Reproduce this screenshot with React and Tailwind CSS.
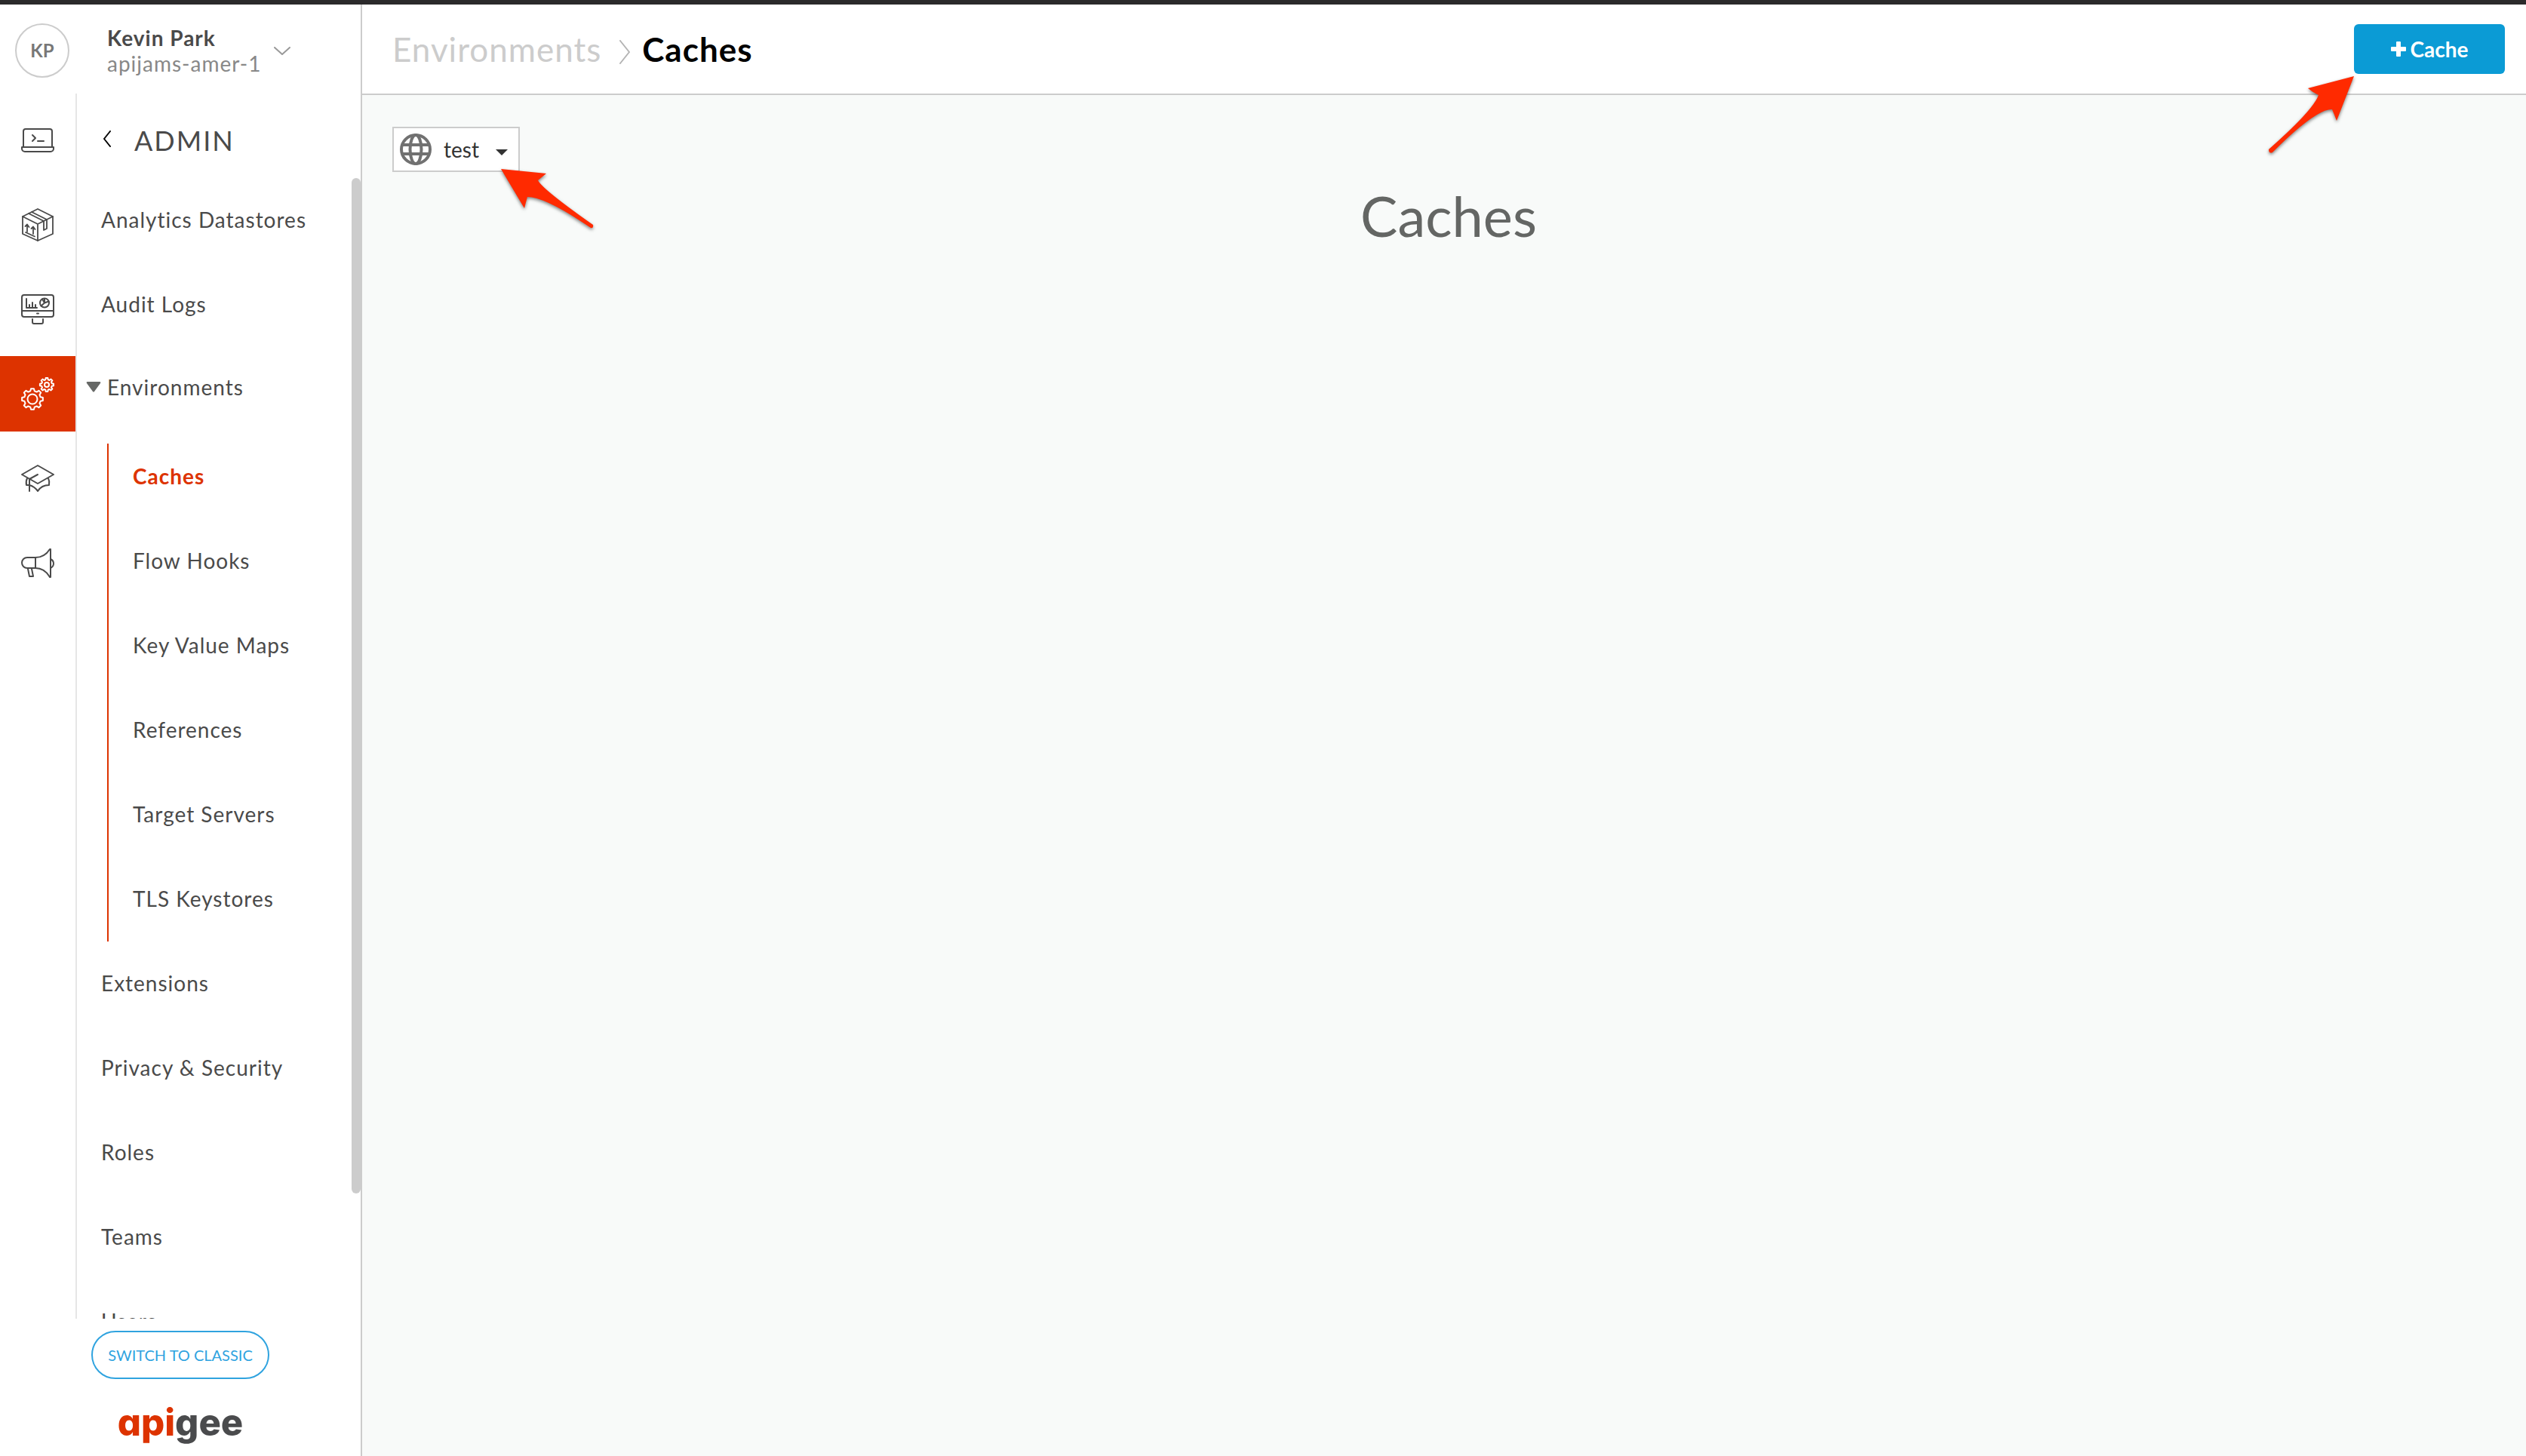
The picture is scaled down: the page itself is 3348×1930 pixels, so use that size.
import React from "react";

const stroke = {
  viewBox: "0 0 44 44",
  fill: "none",
  stroke: "currentColor",
  strokeWidth: 2,
  strokeLinecap: "round",
  strokeLinejoin: "round",
  "aria-hidden": true,
};

function LaptopIcon() {
  return (
    <svg {...stroke} className="size-11">
      <path d="M3 30V10a3 3 0 0 1 3-3h32a3 3 0 0 1 3 3v20" />
      <path d="M1 31h42v2a4 4 0 0 1-4 4H5a4 4 0 0 1-4-4z" />
      <path d="M15 15l4 4-4 4M22 23h8" />
    </svg>
  );
}

function PackageIcon() {
  return (
    <svg {...stroke} className="size-11" strokeWidth="1.8">
      <path d="M22 1l20 10v23L22 43 2 34V11z" />
      <path d="M2 11l20 10 20-10M22 21v22" />
      <path d="M10 7l20 10v12l4-2V15L14 5" />
      <path d="M8 31V22M5.500 24L8 21.500l2.500 3.500M16 34v-9M13.500 27l2.500-2.500 2.500 3.500M6 32l12 5.500" />
    </svg>
  );
}

function MonitorIcon() {
  return (
    <svg {...stroke} className="size-11">
      <rect x="1" y="3" width="42" height="29" rx="3" />
      <path d="M1 24h42M21 27.500h2M15 35v4a2 2 0 0 0 2 2h10a2 2 0 0 0 2-2v-4" />
      <path d="M7 8v12h14M11 16v3M15 13v6M19 16v3" />
      <circle cx="31" cy="13.500" r="6" />
      <path d="M31 8v5.500l5.500-2M31 13.500l-4.500 4M31 13.500l-3-5" />
    </svg>
  );
}

// Outline of a gear with eight teeth, centred on (cx, cy).
function gearPath(cx, cy, outer, inner) {
  const points = [];
  for (let i = 0; i < 8; i += 1) {
    const base = (i * Math.PI) / 4;
    [
      [-0.25, inner],
      [-0.14, outer],
      [0.14, outer],
      [0.25, inner],
    ].forEach(([turn, r]) => {
      const x = cx + r * Math.sin(base + turn);
      const y = cy - r * Math.cos(base + turn);
      points.push(`${x.toFixed(2)} ${y.toFixed(2)}`);
    });
  }
  return `M${points.join("L")}Z`;
}

function GearsIcon() {
  return (
    <svg {...stroke} className="size-11">
      <path d={gearPath(15, 29, 14, 11)} />
      <circle cx="15" cy="29" r="6.500" />
      <path d={gearPath(34, 10, 9.2, 7)} />
      <circle cx="34" cy="10" r="3" />
    </svg>
  );
}

function GraduationIcon() {
  return (
    <svg {...stroke} className="size-11">
      <path d="M22 5l21 12-21 12L1 17z" />
      <path d="M22 17l-11 6v16" />
      <path d="M8 22q-2 4-1 9h4M36 22q2 4 1 9-10 0-15 8-4-6-11-8" />
    </svg>
  );
}

function MegaphoneIcon() {
  return (
    <svg {...stroke} className="size-11">
      <path d="M19 15H8a7 7 0 0 0 0 14h11z" />
      <path d="M19 15Q31 15 38 4h1v37h-1Q31 29 19 29" />
      <path d="M39 17q4 2 4 6t-4 6M9 30l2 10h5l-2-10" />
    </svg>
  );
}

function GlobeIcon() {
  return (
    <svg viewBox="0 0 42 42" fill="none" stroke="#717171" strokeWidth="4" className="size-[42px]" aria-hidden="true">
      <circle cx="21" cy="21" r="19" />
      <ellipse cx="21" cy="21" rx="7.500" ry="19" />
      <path d="M3 15h36M3 27h36" />
    </svg>
  );
}

function PlusIcon() {
  return (
    <svg viewBox="0 0 20 20" fill="currentColor" className="size-5" aria-hidden="true">
      <rect x="7" y="0" width="6" height="20" rx="1" />
      <rect x="0" y="7" width="20" height="6" rx="1" />
    </svg>
  );
}

function Chevron({ d, className, width, height, strokeWidth }) {
  return (
    <svg
      width={width}
      height={height}
      viewBox={`0 0 ${width} ${height}`}
      fill="none"
      stroke="currentColor"
      strokeWidth={strokeWidth}
      strokeLinecap="round"
      strokeLinejoin="round"
      className={className}
      aria-hidden="true"
    >
      <path d={d} />
    </svg>
  );
}

const railItems = [
  { label: "Develop", Icon: LaptopIcon },
  { label: "Publish", Icon: PackageIcon },
  { label: "Analyze", Icon: MonitorIcon },
  { label: "Admin", Icon: GearsIcon, active: true },
  { label: "Learn", Icon: GraduationIcon },
  { label: "Announcements", Icon: MegaphoneIcon },
];

const environmentItems = [
  "Caches",
  "Flow Hooks",
  "Key Value Maps",
  "References",
  "Target Servers",
  "TLS Keystores",
];

function NavLink({ children }) {
  return (
    <li>
      <a href="#" className="flex h-28 items-center pb-0.5 pl-8">
        {children}
      </a>
    </li>
  );
}

function Sidebar() {
  return (
    <aside className="flex w-[480px] shrink-0 flex-col border-r-2 border-[#cccccc] bg-white text-[#4a4a4a]">
      <div className="flex h-[118px] shrink-0 items-center pt-1 pl-5">
        <div className="flex size-[72px] items-center justify-center rounded-full border-2 border-[#cccccc] text-2xl font-bold text-[#777777]">
          KP
        </div>
        <button type="button" className="ml-[50px] flex items-center gap-4 text-left text-[28px] leading-[34px] tracking-[1px]">
          <span>
            <span className="block font-bold">Kevin Park</span>
            <span className="block text-[#888888]">apijams-amer-1</span>
          </span>
          <Chevron d="M1 1l10 9 10-9" width={22} height={11} strokeWidth={2} className="text-[#999999]" />
        </button>
      </div>

      <div className="flex min-h-0 flex-1">
        <nav aria-label="Sections" className="flex w-[102px] shrink-0 flex-col gap-3 border-r-2 border-[#e6e6e6] pt-3">
          {railItems.map(({ label, Icon, active }) => (
            <a
              key={label}
              href="#"
              aria-label={label}
              className={
                active
                  ? "flex h-[100px] items-center justify-center bg-[#dd3300] text-white"
                  : "flex h-[100px] items-center justify-center"
              }
            >
              <Icon />
            </a>
          ))}
        </nav>

        <div className="flex min-w-0 flex-1 flex-col">
          <div className="flex h-28 shrink-0 items-center gap-[30px] pt-3 pl-8">
            <button type="button" aria-label="Back" className="-mt-1 pl-0.5 text-black">
              <Chevron d="M10 1L2 11l8 10" width={12} height={22} strokeWidth={2} />
            </button>
            <h2 className="text-4xl tracking-[2px]">ADMIN</h2>
          </div>

          <div className="flex min-h-0 flex-1">
            <nav
              aria-label="Admin"
              className="min-w-0 flex-1 overflow-hidden text-[28px] leading-[34px] tracking-[1px]"
            >
              <ul>
                <NavLink>Analytics Datastores</NavLink>
                <NavLink>Audit Logs</NavLink>
                <li>
                  <button type="button" aria-expanded="true" className="flex h-27 items-center gap-2 pb-0.5 pl-3 tracking-[1px]">
                    <svg width="20" height="14" viewBox="0 0 20 14" fill="#666866" aria-hidden="true">
                      <path d="M2 0h16q2 0 1 2l-8 11q-1 1-2 0L1 2Q0 0 2 0z" />
                    </svg>
                    Environments
                  </button>
                  <ul className="mt-5 ml-10 flex flex-col gap-6 border-l-2 border-[#dd3300] pb-3">
                    {environmentItems.map((item) => (
                      <li key={item}>
                        <a
                          href="#"
                          className={
                            item === "Caches"
                              ? "flex h-22 items-center pb-0.5 pl-8 font-bold text-[#dd3300]"
                              : "flex h-22 items-center pb-0.5 pl-8"
                          }
                        >
                          {item}
                        </a>
                      </li>
                    ))}
                  </ul>
                </li>
                <NavLink>Extensions</NavLink>
                <NavLink>Privacy &amp; Security</NavLink>
                <NavLink>Roles</NavLink>
                <NavLink>Teams</NavLink>
                <NavLink>Users</NavLink>
              </ul>
            </nav>
            <div className="w-3 shrink-0">
              <div className="h-[89%] rounded-full bg-[#cccccc]" />
            </div>
          </div>
        </div>
      </div>

      <div className="flex h-[182px] shrink-0 flex-col items-center pt-4">
        <button
          type="button"
          className="h-16 rounded-full border-2 border-[#2fa3df] px-5 text-xl whitespace-nowrap text-[#2fa3df]"
        >
          SWITCH TO CLASSIC
        </button>
        <a
          href="#"
          className="mt-7 font-[Inter,sans-serif] text-[49px] leading-[60px] font-extrabold text-[#4a4b4d] [font-feature-settings:'cv11']"
        >
          <span className="text-[#dd3300]">api</span>gee
        </a>
      </div>
    </aside>
  );
}

// Red pointer drawn over the page; its tip is the first point of the path.
function Pointer({ d, className, width, height }) {
  return (
    <svg
      width={width}
      height={height}
      viewBox={`0 0 ${width} ${height}`}
      className={className}
      fill="#ff2a00"
      aria-hidden="true"
    >
      <path d={d} />
    </svg>
  );
}

export default function App() {
  return (
    <div className="flex h-screen flex-col overflow-hidden border-t-6 border-[#2b2a2b] bg-[#f8faf9] font-[Lato,sans-serif]">
      <div className="flex min-h-0 flex-1">
        <Sidebar />
        <div className="flex min-w-0 flex-1 flex-col">
          <header className="flex h-30 shrink-0 items-center justify-between border-b-2 border-[#cccccc] bg-white pr-7 pl-10">
            <nav aria-label="Breadcrumb" className="flex items-center text-[44px] leading-[52px] tracking-[1px]">
              <a href="#" className="text-[#cccccc]">
                Environments
              </a>
              <Chevron d="M1 1l12 15L1 31" width={14} height={32} strokeWidth={2} className="mt-2 mr-4 ml-6 text-[#b4b4b4]" />
              <span className="font-bold text-black">Caches</span>
            </nav>
            <div className="relative">
              <button
                type="button"
                className="flex h-[66px] w-[200px] items-center justify-center gap-1.5 rounded-md bg-[#0b9bd5] text-[28px] leading-[34px] font-bold text-white"
              >
                <PlusIcon />
                Cache
              </button>
              <Pointer
                d="M114 1L53 17Q60 23 67 26Q60 46 1 98Q1 104 6 102Q64 44 85 45Q88 52 91 60Z"
                width={118}
                height={110}
                className="pointer-events-none absolute top-full right-[196px] z-10 mt-0.5 drop-shadow-[0_2px_2px_rgba(0,0,0,0.5)]"
              />
            </div>
          </header>

          <main className="flex flex-1 flex-col items-start pt-[42px] pr-7 pl-10">
            <div className="relative flex h-15 items-center border-2 border-[#cccccc] bg-white pl-2">
              <GlobeIcon />
              <select
                aria-label="Environment"
                className="h-full appearance-none bg-transparent pr-13 pl-4 text-[28px] leading-[34px] text-[#333333]"
              >
                <option>test</option>
              </select>
              <svg width="16" height="8" className="pointer-events-none absolute top-7 right-3.5" fill="#333333" aria-hidden="true">
                <path d="M0 0h16L8 8z" />
              </svg>
              <Pointer
                d="M1 1L61 7Q55 12 50 16Q56 28 123 75Q124 80 120 79Q60 38 36 38Q34 45 32 53Z"
                width={128}
                height={86}
                className="pointer-events-none absolute top-[53px] left-[141px] z-10 drop-shadow-[0_2px_2px_rgba(0,0,0,0.5)]"
              />
            </div>
            <h1 className="mt-3.5 self-center text-[74px] leading-[88px] text-[#646664]">Caches</h1>
          </main>
        </div>
      </div>
    </div>
  );
}
